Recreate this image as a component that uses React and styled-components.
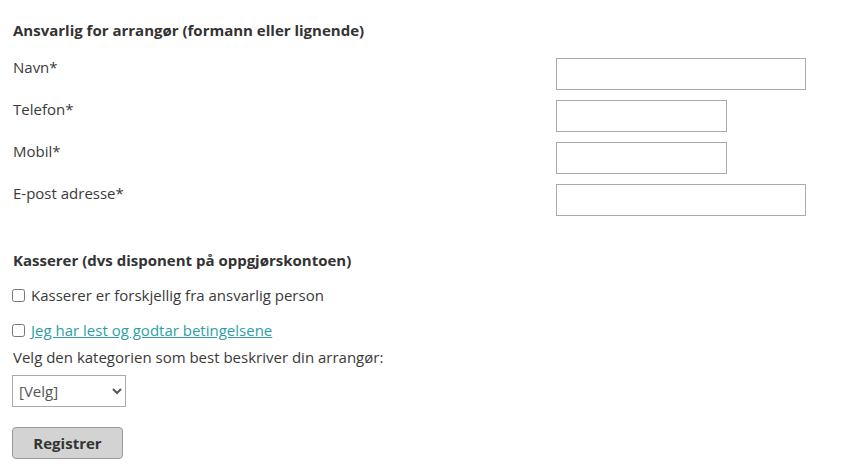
import React from "react";
import styled, { createGlobalStyle } from "styled-components";

const GlobalStyle = createGlobalStyle`
  body {
    margin: 0;
    background: #fff;
    font-family: "Open Sans", "Liberation Sans", sans-serif;
    color: #333;
  }
`;

const Page = styled.form`
  padding: 20px 13px 8px 13px;
  width: 854px;
  box-sizing: border-box;
`;

const SectionTitle = styled.h3`
  margin: ${(p) => p.$top || 0}px 0 0 0;
  font-size: 15px;
  line-height: 20px;
  font-weight: 700;
  color: #333;
`;

const Fields = styled.div`
  display: flex;
  flex-direction: column;
  gap: 10px;
  margin-top: 18px;
`;

const Row = styled.div`
  display: grid;
  grid-template-columns: 543px 1fr;
  align-items: start;
`;

const Label = styled.label`
  font-size: 15px;
  line-height: 18px;
  color: #3a3a3a;
`;

const TextInput = styled.input`
  width: ${(p) => p.$width}px;
  height: 32px;
  box-sizing: border-box;
  border: 1px solid #aaa;
  border-radius: 0;
  padding: 4px 6px;
  font: inherit;
  font-size: 14px;
`;

const CheckRow = styled.label`
  display: flex;
  align-items: center;
  gap: 6px;
  margin-top: ${(p) => p.$top}px;
  font-size: 15px;
  line-height: 20px;
  color: #3a3a3a;
`;

const Check = styled.input`
  margin: 0 0 0 -1px;
  width: 13px;
  height: 13px;
`;

const TermsLink = styled.a`
  color: #2e9ea6;
  text-decoration: underline;
`;

const Prompt = styled.div`
  margin-top: 7px;
  font-size: 15px;
  line-height: 20px;
  color: #3a3a3a;
`;

const Select = styled.select`
  display: block;
  margin: 8px 0 0 -1px;
  width: 114px;
  height: 32px;
  border: 1px solid #aaa;
  border-radius: 0;
  background: #fff;
  color: #555;
  font-family: inherit;
  font-size: 15px;
  padding: 0 2px;
`;

const Button = styled.button`
  display: block;
  margin: 20px 0 0 -1px;
  width: 111px;
  height: 32px;
  background: #d3d3d3;
  border: 1px solid #999;
  border-radius: 4px;
  font-family: inherit;
  font-size: 15px;
  font-weight: 700;
  color: #333;
  padding: 0;
`;

const fields = [
  { label: "Navn*", width: 250 },
  { label: "Telefon*", width: 171 },
  { label: "Mobil*", width: 171 },
  { label: "E-post adresse*", width: 250 },
];

export default function App() {
  return (
    <>
      <GlobalStyle />
      <Page onSubmit={(e) => e.preventDefault()}>
        <SectionTitle>Ansvarlig for arrangør (formann eller lignende)</SectionTitle>
        <Fields>
          {fields.map((f) => (
            <Row key={f.label}>
              <Label>{f.label}</Label>
              <TextInput type="text" $width={f.width} />
            </Row>
          ))}
        </Fields>
        <SectionTitle $top={34}>Kasserer (dvs disponent på oppgjørskontoen)</SectionTitle>
        <CheckRow $top={15}>
          <Check type="checkbox" />
          Kasserer er forskjellig fra ansvarlig person
        </CheckRow>
        <CheckRow $top={15}>
          <Check type="checkbox" />
          <TermsLink href="#">Jeg har lest og godtar betingelsene</TermsLink>
        </CheckRow>
        <Prompt>Velg den kategorien som best beskriver din arrangør:</Prompt>
        <Select defaultValue="">
          <option value="">[Velg]</option>
        </Select>
        <Button type="submit">Registrer</Button>
      </Page>
    </>
  );
}
